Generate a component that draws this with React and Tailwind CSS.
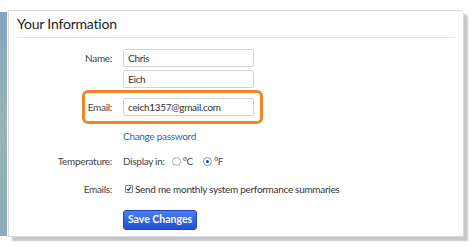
import React from "react";

export default function App() {
  const font = { fontFamily: 'Lato, "Open Sans", "Liberation Sans", sans-serif' };
  return (
    <div className="w-[474px] h-[247px] bg-white flex pt-[10px] overflow-hidden" style={font}>
      <div className="w-[7px] h-[224px] mt-[2px] bg-gradient-to-b from-[#84a4c0] via-[#98b3b4] to-[#8caabb]" />
      <div className="ml-[1px] w-[456px] h-[227px] bg-white border border-[#d9d9d9] rounded-tr-[4px] shadow-[4px_4px_2px_rgba(0,0,0,0.22)] flex flex-col">
        <div className="mx-[8px] pt-[3px] pb-[3px] border-b border-[#e6e6e6] text-[14px] tracking-[-0.2px] leading-[20px] text-[#222]">
          Your Information
        </div>
        <div className="flex flex-col mt-[11px] text-[10px] tracking-[-0.3px] text-[#444]">
          <div className="flex items-center">
            <div className="w-[103px] text-right">Name:</div>
            <div className="ml-[11px] w-[131px] h-[18px] border border-[#d4d4d4] rounded-[2px] px-[4px] flex items-center text-[#333]">Chris</div>
          </div>
          <div className="flex items-center mt-[3px]">
            <div className="w-[103px]" />
            <div className="ml-[11px] w-[131px] h-[18px] border border-[#d4d4d4] rounded-[2px] px-[4px] flex items-center text-[#333]">Eich</div>
          </div>
          <div className="ml-[73px] mt-[2px] w-[181px] h-[34px] border-[3px] border-[#ef8526] rounded-[6px] flex items-center">
            <div className="w-[27px] text-right">Email:</div>
            <div className="ml-[11px] w-[131px] h-[18px] border border-[#d4d4d4] rounded-[2px] px-[4px] flex items-center text-[#333]">ceich1357@gmail.com</div>
          </div>
          <div className="ml-[114px] mt-[5px] text-[#2f5fb4] leading-[14px]">Change password</div>
          <div className="flex items-center mt-[11px] leading-[14px]">
            <div className="w-[103px] text-right">Temperature:</div>
            <div className="ml-[11px] flex items-center">
              <span>Display in:</span>
              <span className="ml-[7px] w-[9px] h-[9px] rounded-full border border-[#aaa] bg-white" />
              <span className="ml-[2px]">°C</span>
              <span className="ml-[10px] w-[9px] h-[9px] rounded-full border border-[#7b8fb0] bg-white flex items-center justify-center">
                <span className="w-[3px] h-[3px] rounded-full bg-[#1d3f8a]" />
              </span>
              <span className="ml-[2px]">°F</span>
            </div>
          </div>
          <div className="flex items-center mt-[14px] leading-[14px]">
            <div className="w-[103px] text-right">Emails:</div>
            <div className="ml-[13px] flex items-center">
              <span className="w-[8px] h-[8px] border border-[#888] rounded-[1px] bg-white flex items-center justify-center">
                <svg width="8" height="8" viewBox="0 0 8 8"><path d="M1.5 4.2 L3.2 6 L6.8 1.2" stroke="#1d3f8a" strokeWidth="1.6" fill="none" /></svg>
              </span>
              <span className="ml-[2px] text-[#333]">Send me monthly system performance summaries</span>
            </div>
          </div>
          <div className="ml-[114px] mt-[14px] w-[74px] h-[20px] rounded-[3px] bg-gradient-to-b from-[#4a7ef0] to-[#1f4fd2] border border-[#1e46b8] text-white font-bold text-[10.5px] tracking-normal flex items-center justify-center">
            Save Changes
          </div>
        </div>
      </div>
    </div>
  );
}
